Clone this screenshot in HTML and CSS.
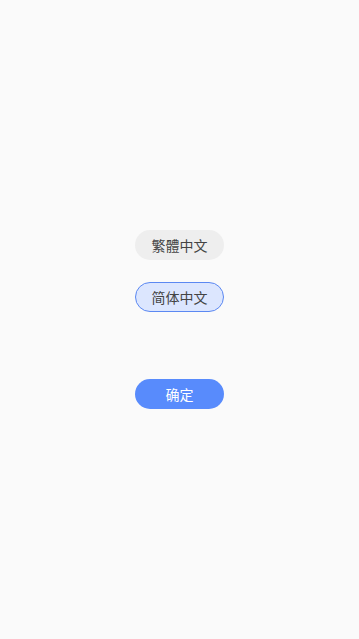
FILE: index.html
```html
<!DOCTYPE html>
<html lang="zh">
<head>
<meta charset="utf-8">
<link rel="stylesheet" href="styles.css">
</head>
<body>
<div class="page">
  <div class="options">
    <div class="opt">繁體中文</div>
    <div class="opt selected">简体中文</div>
  </div>
  <div class="confirm">确定</div>
</div>
</body>
</html>
```

FILE: styles.css
```css
html, body {
  margin: 0;
  padding: 0;
  background: #fafafa;
  font-family: "Noto Sans CJK SC", "Noto Sans", sans-serif;
}
.page {
  width: 359px;
  height: 639px;
  display: flex;
  flex-direction: column;
  align-items: center;
  padding-top: 230px;
  box-sizing: border-box;
}
.options {
  display: flex;
  flex-direction: column;
  gap: 22px;
}
.opt, .confirm {
  width: 89px;
  height: 30px;
  box-sizing: border-box;
  border-radius: 15px;
  display: flex;
  align-items: center;
  justify-content: center;
  font-size: 14px;
  color: #444;
}
.opt {
  background: #eeeeee;
}
.opt.selected {
  background: #dce6fe;
  border: 1px solid #5b88f2;
}
.confirm {
  margin-top: 67px;
  background: #588bfc;
  color: #fff;
}
```
